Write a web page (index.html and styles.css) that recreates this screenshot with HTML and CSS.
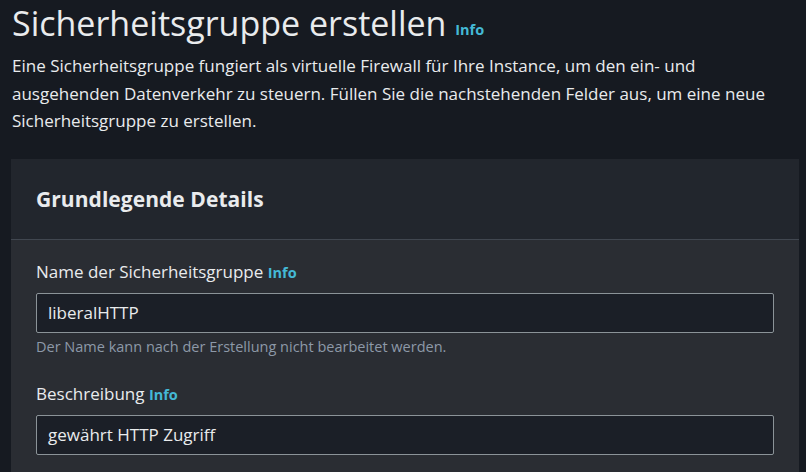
FILE: index.html
```html
<!DOCTYPE html>
<html lang="de">
<head>
<meta charset="utf-8">
<link rel="stylesheet" href="styles.css">
</head>
<body>
<div class="page">
  <header class="head">
    <h1 class="title">Sicherheitsgruppe erstellen <a class="info info-lg">Info</a></h1>
    <p class="desc">Eine Sicherheitsgruppe fungiert als virtuelle Firewall für Ihre Instance, um den ein- und ausgehenden Datenverkehr zu steuern. Füllen Sie die nachstehenden Felder aus, um eine neue Sicherheitsgruppe zu erstellen.</p>
  </header>
  <section class="card">
    <div class="card-head"><h2>Grundlegende Details</h2></div>
    <div class="card-body">
      <div class="field">
        <label class="label">Name der Sicherheitsgruppe <a class="info">Info</a></label>
        <div class="input">liberalHTTP</div>
        <div class="hint">Der Name kann nach der Erstellung nicht bearbeitet werden.</div>
      </div>
      <div class="field">
        <label class="label">Beschreibung <a class="info">Info</a></label>
        <div class="input">gewährt HTTP Zugriff</div>
      </div>
    </div>
  </section>
</div>
</body>
</html>
```
FILE: styles.css
```css
html, body { margin: 0; padding: 0; background: #161a21; }
body { font-family: "Open Sans", "Noto Sans", sans-serif; color: #e9ebed; width: 806px; height: 472px; overflow: hidden; }
.page { padding: 0 7px 0 11px; }
.head { padding-left: 1px; }
.title { margin: 0; padding-top: 1px; font-size: 34px; font-weight: 400; line-height: 44px; color: #e9ebed; }
.info { color: #44b9d6; font-weight: 700; font-size: 14px; letter-spacing: 0; }
.info-lg { font-size: 14.5px; vertical-align: 1px; }
.desc { margin: 0; font-size: 17px; line-height: 27.5px; color: #e9ebed; }
.card { margin-top: 24px; background: #2a2d33; height: 313px; overflow: hidden; }
.card-head { background: #22262d; height: 80px; border-bottom: 1px solid #414750; display: flex; align-items: center; padding-left: 25px; }
.card-head h2 { margin: 0; font-size: 21px; font-weight: 700; letter-spacing: 0.05px; color: #e9ebed; }
.card-body { padding: 19px 25px 0 25px; }
.field { margin-bottom: 24px; }
.field:last-child { margin-bottom: 0; }
.label { display: block; font-size: 17px; line-height: 26px; color: #e9ebed; }
.label .info { font-size: 14.5px; }
.input { margin-top: 7px; width: 738px; height: 40px; box-sizing: border-box; border: 1px solid #8b9398; border-radius: 2px; background: #1b1f27; padding-left: 11px; display: flex; align-items: center; font-size: 17px; color: #e9ebed; }
.hint { margin-top: 4px; font-size: 14.5px; line-height: 20px; color: #8d99a8; }
```
